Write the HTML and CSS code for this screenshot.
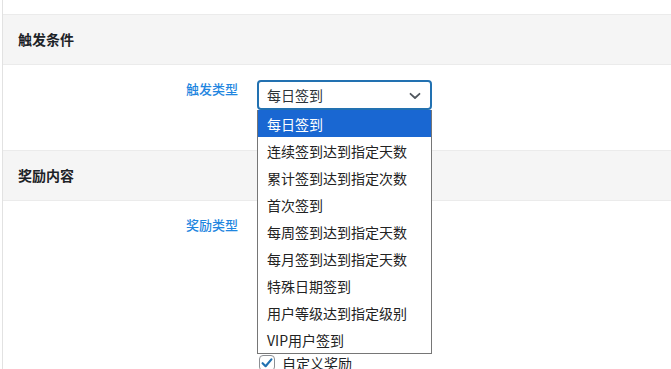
FILE: index.html
```html
<!DOCTYPE html>
<html lang="zh-CN">
<head>
<meta charset="utf-8">
<title>签到规则</title>
<link rel="stylesheet" href="styles.css">
</head>
<body>
<div class="panel">
  <div class="section-head">触发条件</div>
  <div class="form-row">
    <div class="row-label">触发类型</div>
    <div class="row-field">
      <div class="select-wrap">
        <div class="select">
          <span class="select-value">每日签到</span>
          <svg class="chevron" width="12" height="8" viewBox="0 0 12 8"><path d="M1.5 1.8 L6 6 L10.5 1.8" fill="none" stroke="#50575e" stroke-width="1.8" stroke-linecap="round" stroke-linejoin="round"/></svg>
        </div>
        <ul class="dropdown">
          <li class="opt selected">每日签到</li>
          <li class="opt">连续签到达到指定天数</li>
          <li class="opt">累计签到达到指定次数</li>
          <li class="opt">首次签到</li>
          <li class="opt">每周签到达到指定天数</li>
          <li class="opt">每月签到达到指定天数</li>
          <li class="opt">特殊日期签到</li>
          <li class="opt">用户等级达到指定级别</li>
          <li class="opt">VIP用户签到</li>
        </ul>
      </div>
    </div>
  </div>
  <div class="section-head">奖励内容</div>
  <div class="form-row">
    <div class="row-label">奖励类型</div>
    <div class="row-field checks">
      <label class="check"><span class="box on"><svg width="14" height="14" viewBox="0 0 14 14"><path d="M2.6 7.2 L5.6 10.2 L11.4 3.4" fill="none" stroke="#2271b1" stroke-width="2.2" stroke-linecap="round" stroke-linejoin="round"/></svg></span>自定义奖励</label>
    </div>
  </div>
</div>
</body>
</html>
```

FILE: styles.css
```css
html, body {
  margin: 0;
  padding: 0;
  background: #ffffff;
  overflow: hidden;
}
body {
  font-family: "Noto Sans CJK SC", "Liberation Sans", sans-serif;
  color: #1d2327;
  font-size: 14px;
}
.panel {
  margin-left: 2px;
  border-left: 1px solid #e2e2e2;
  padding-top: 14px;
  min-height: 400px;
}
.section-head {
  height: 49px;
  line-height: 49px;
  background: #f5f5f5;
  border-top: 1px solid #ebebeb;
  border-bottom: 1px solid #ebebeb;
  padding-left: 15px;
  font-size: 14px;
  font-weight: bold;
  color: #1d2327;
}
.form-row {
  display: grid;
  grid-template-columns: 235px 1fr;
  column-gap: 19px;
  min-height: 85px;
  box-sizing: border-box;
  padding-top: 15px;
}
.row-label {
  text-align: right;
  font-size: 13px;
  line-height: 18px;
  font-weight: 500;
  color: #1f86e0;
}
.row-field {
  position: relative;
}
.select-wrap {
  position: relative;
  width: 175px;
}
.select {
  box-sizing: border-box;
  width: 175px;
  height: 30px;
  border: 2px solid #2271b1;
  border-radius: 4px;
  display: flex;
  align-items: center;
  justify-content: space-between;
  padding: 0 8px 0 8px;
  background: #fff;
}
.select-value {
  font-size: 14px;
  line-height: 20px;
  color: #2c3338;
}
.chevron {
  display: block;
  margin-right: 1px;
  margin-top: 1px;
}
.dropdown {
  position: absolute;
  z-index: 5;
  top: 30px;
  left: 0;
  width: 175px;
  box-sizing: border-box;
  margin: 0;
  padding: 0;
  list-style: none;
  background: #fff;
  border: 1px solid #767676;
  border-top: 0;
}
.opt {
  height: 27px;
  line-height: 28px;
  padding-left: 9px;
  font-size: 14px;
  color: #222;
  white-space: nowrap;
}
.opt.selected {
  background: #1967d2;
  color: #fff;
}
.checks {
  display: flex;
  flex-direction: column;
  padding-top: 133px;
}
.check {
  display: flex;
  align-items: center;
  gap: 7px;
  height: 27px;
  padding-left: 2px;
  font-size: 14px;
  color: #1d2327;
}
.box {
  box-sizing: border-box;
  width: 16px;
  height: 16px;
  border: 1px solid #8c8f94;
  border-radius: 4px;
  background: #fff;
  display: flex;
  align-items: center;
  justify-content: center;
}
```
